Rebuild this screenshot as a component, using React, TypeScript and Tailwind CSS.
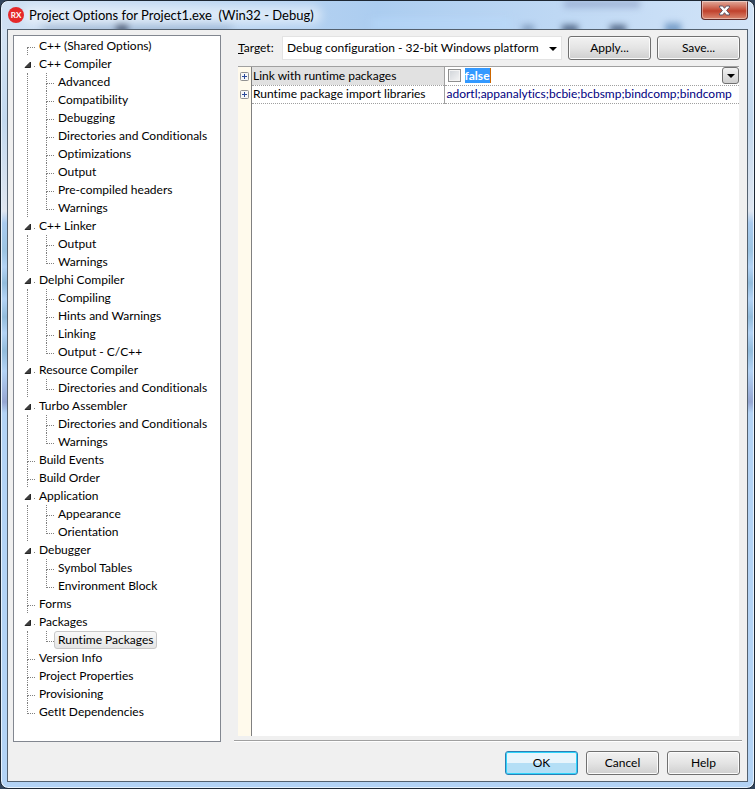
import { useState } from 'react';

interface TreeItem {
  name: string;
  children?: string[];
}

const OPTIONS: TreeItem[] = [
  { name: 'C++ (Shared Options)' },
  {
    name: 'C++ Compiler',
    children: [
      'Advanced', 'Compatibility', 'Debugging', 'Directories and Conditionals',
      'Optimizations', 'Output', 'Pre-compiled headers', 'Warnings',
    ],
  },
  { name: 'C++ Linker', children: ['Output', 'Warnings'] },
  { name: 'Delphi Compiler', children: ['Compiling', 'Hints and Warnings', 'Linking', 'Output - C/C++'] },
  { name: 'Resource Compiler', children: ['Directories and Conditionals'] },
  { name: 'Turbo Assembler', children: ['Directories and Conditionals', 'Warnings'] },
  { name: 'Build Events' },
  { name: 'Build Order' },
  { name: 'Application', children: ['Appearance', 'Orientation'] },
  { name: 'Debugger', children: ['Symbol Tables', 'Environment Block'] },
  { name: 'Forms' },
  { name: 'Packages', children: ['Runtime Packages'] },
  { name: 'Version Info' },
  { name: 'Project Properties' },
  { name: 'Provisioning' },
  { name: 'GetIt Dependencies' },
];

const IMPORT_LIBRARIES = 'adortl;appanalytics;bcbie;bcbsmp;bindcomp;bindcomp';

export default function App() {
  const [selected, setSelected] = useState('Packages/Runtime Packages');
  const [closed, setClosed] = useState<string[]>([]);
  const [linked, setLinked] = useState(false);

  const toggle = (name: string) =>
    setClosed(closed.includes(name) ? closed.filter(n => n !== name) : [...closed, name]);

  return (
    <div className="min-h-screen bg-[#31445c] font-['Lato','Open_Sans',sans-serif] text-[12px] leading-4 text-black [font-variant-ligatures:none]">
      <div className="flex min-h-screen flex-col rounded-lg border border-[#1d2733] bg-[linear-gradient(to_bottom,#d9e6f5_0px,#c3d9ef_120px,#dfe6f0_210px,#a9cbef_222px,#9cc4e2_250px,#b3d3f5_266px,#92bcdc_282px,#b3d3f5_298px,#92bcdc_316px,#b3d3f5_332px,#92bcdc_350px,#b3d3f5_370px,#95a6d2_401px,#b3d3f5_412px,#b3d3f5_100%)] px-[6px] pb-[6px] shadow-[inset_0_0_0_1px_#e6f1fc]">
        <TitleBar />

        <div className="flex flex-1 flex-col border border-[#54616f] bg-[#f0f0f0]">
          <div className="flex flex-1 gap-[13px] pt-[5px] pr-[5px] pl-[5px]">
            {/* Options tree */}
            <nav aria-label="Options" className="w-[208px] shrink-0 border border-[#828790] bg-white pt-px pl-[13px]">
              <ul>
                {OPTIONS.map((item, i) => {
                  const last = i === OPTIONS.length - 1;
                  const open = !closed.includes(item.name);
                  return (
                    <li key={item.name}>
                      <div className="flex h-[18px]">
                        {item.children ? (
                          <Expander name={item.name} open={open} onClick={() => toggle(item.name)} />
                        ) : (
                          <Branch first={i === 0} last={last} />
                        )}
                        <TreeLabel
                          name={item.name}
                          active={selected === item.name}
                          onClick={() => setSelected(item.name)}
                        />
                      </div>
                      {item.children && open && (
                        <ul className={last ? 'pl-[19px]' : 'border-l border-dotted border-[#808080] pl-[18px]'}>
                          {item.children.map((child, j) => (
                            <li key={child} className="flex h-[18px]">
                              <Branch last={j === item.children!.length - 1} />
                              <TreeLabel
                                name={child}
                                active={selected === `${item.name}/${child}`}
                                onClick={() => setSelected(`${item.name}/${child}`)}
                              />
                            </li>
                          ))}
                        </ul>
                      )}
                    </li>
                  );
                })}
              </ul>
            </nav>

            {/* Settings of the selected page */}
            <main className="mb-px flex min-w-0 flex-1 flex-col border-b border-[#a0a0a0] pb-1 pl-1 shadow-[0_1px_0_#ffffff]">
              <div className="mr-[2px] flex items-center gap-[6px] pt-px">
                <label htmlFor="target" className="w-[38px] shrink-0">
                  <span className="underline">T</span>arget:
                </label>
                <div className="relative min-w-0 flex-1">
                  <select
                    id="target"
                    className="block h-6 w-full appearance-none border border-[#e3e3e3] bg-white pr-5 pl-1 outline-none"
                  >
                    <option>Debug configuration - 32-bit Windows platform</option>
                    <option>Release configuration - 32-bit Windows platform</option>
                  </select>
                  <DownArrow className="pointer-events-none absolute top-[11px] right-[5px]" />
                </div>
                <DialogButton label="Apply..." />
                <DialogButton label="Save..." />
              </div>

              <div className="mt-[6px] mr-[3px] flex-1 border-t border-[#a0a0a0] bg-[linear-gradient(to_right,#fffaec_13px,#808080_13px,#808080_14px,#ffffff_14px)]">
                <table className="w-full table-fixed border-collapse">
                  <tbody>
                    <tr className="h-[18px]">
                      <td className="w-[14px] p-0 align-middle"><PlusButton label="Link with runtime packages" /></td>
                      <th className="w-[192px] border-r border-b border-r-[#a0a0a0] border-b-[#a0a0a0] bg-[#e1e1e1] p-0 pl-px text-left font-normal [border-bottom-style:dotted]">
                        <label htmlFor="link">Link with runtime packages</label>
                      </th>
                      <td className="border-b border-dotted border-[#a0a0a0] p-0 pl-[3px]">
                        <div className="flex h-[17px] items-center">
                          <input
                            id="link"
                            type="checkbox"
                            checked={linked}
                            onChange={e => setLinked(e.target.checked)}
                            className="size-[13px] appearance-none border border-[#8e8f8f] bg-linear-to-br from-[#cfd3d8] to-[#f6f6f6] shadow-[inset_0_0_0_1px_#f4f4f4] checked:bg-[#3399ff]"
                          />
                          <span className="ml-1 h-[15px] border-r border-[#cc6600] bg-[#3399ff] leading-[15px] font-bold text-white">
                            {linked ? 'true' : 'false'}
                          </span>
                          <button
                            type="button"
                            aria-label="Choose value"
                            className="ml-auto flex h-[17px] w-[17px] items-center justify-center rounded-[3px] border border-[#707070] bg-linear-to-b from-[#f2f2f2] to-[#cfcfcf]"
                          >
                            <DownArrow />
                          </button>
                        </div>
                      </td>
                    </tr>
                    <tr className="h-[18px]">
                      <td className="p-0 align-middle"><PlusButton label="Runtime package import libraries" /></td>
                      <th className="border-r border-b border-r-[#a0a0a0] border-b-[#a0a0a0] p-0 pl-px text-left font-normal whitespace-nowrap [border-bottom-style:dotted]">
                        Runtime package import libraries
                      </th>
                      <td className="overflow-hidden border-b border-dotted border-[#a0a0a0] p-0 pl-[2px] whitespace-nowrap text-[#000080]">
                        {IMPORT_LIBRARIES}
                      </td>
                    </tr>
                  </tbody>
                </table>
              </div>
            </main>
          </div>

          {/* Dialog buttons */}
          <div className="flex justify-end gap-2 px-[7px] pt-[9px] pb-[6px]">
            <button
              type="button"
              className="h-6 w-[73px] rounded-[3px] border border-[#2c7fb5] bg-linear-to-b from-[#e8f5fc] from-50% to-[#b4dff6] to-50% shadow-[inset_0_0_0_1px_#2fd5fb]"
            >
              OK
            </button>
            <DialogButton label="Cancel" narrow />
            <DialogButton label="Help" narrow />
          </div>
        </div>
      </div>
    </div>
  );
}

function TitleBar() {
  return (
    <header className="relative -mx-[5px] flex h-7 items-start overflow-hidden rounded-t-lg bg-linear-to-r from-[#cfe0f3] via-[#accdf0] via-50% to-[#d2e4f8] pl-[6px]">
      {/* Desktop showing softly through the glass */}
      <div aria-hidden="true" className="absolute inset-0">
        <div className="absolute top-[23px] left-[40px] h-2 w-[190px] bg-[#7390b3]/50 blur-[4px]" />
        <div className="absolute top-[23px] left-[114px] h-2 w-3 bg-[#2a3a55]/80 blur-[3px]" />
        <div className="absolute top-[19px] left-[370px] h-2 w-[140px] bg-[#b9dcfc]/70 blur-[4px]" />
        <div className="absolute -top-px left-[562px] h-2 w-[76px] bg-[#7f92bb]/50 blur-[3px]" />
        <div className="absolute top-[24px] left-[520px] h-2 w-3 bg-[#4b6a92]/50 blur-[3px]" />
        <div className="absolute top-[24px] left-[560px] h-2 w-4 bg-[#22385a]/70 blur-[3px]" />
        <div className="absolute top-[24px] left-[608px] h-2 w-4 bg-[#22385a]/70 blur-[3px]" />
        <div className="absolute top-[22px] left-[663px] h-3 w-4 bg-[#5a86b8]/70 blur-[3px]" />
        <div className="absolute top-[5px] left-[20px] h-[18px] w-[300px] rounded-full bg-white/50 blur-[5px]" />
      </div>
      <svg width="16" height="16" viewBox="0 0 16 16" className="relative mt-[6px] shrink-0">
        <circle cx="8" cy="8" r="8" fill="#e5282a" />
        <text x="8" y="11" textAnchor="middle" fontSize="8" fontWeight="700" fill="#ffffff">RX</text>
      </svg>
      <h1 className="relative ml-[5px] pt-[6px] text-[13px] leading-4 whitespace-pre">
        Project Options for Project1.exe  (Win32 - Debug)
      </h1>
      <button
        type="button"
        aria-label="Close"
        className="relative mr-[5px] ml-auto flex h-[19px] w-[47px] items-center justify-center rounded-b-[4px] border border-t-0 border-[#5b2a2a] bg-linear-to-b from-[#e0aa9c] from-0% via-[#c0402c] via-55% to-[#d98670] shadow-[inset_0_0_0_1px_rgba(255,255,255,0.4)]"
      >
        <svg width="13" height="11" viewBox="0 0 13 11">
          <path
            d="M1.5 1h3.2l1.8 2.3L8.3 1h3.2v1.2L8.6 5.5l2.9 3.3V10H8.3L6.5 7.7 4.7 10H1.5V8.8l2.9-3.3-2.9-3.3z"
            fill="#ffffff"
            stroke="#5d5565"
            strokeWidth="1"
          />
        </svg>
      </button>
    </header>
  );
}

// Dotted line from the parent, turning right towards the label
function Branch({ first, last }: { first?: boolean; last?: boolean }) {
  return (
    <span aria-hidden="true" className="flex w-2 shrink-0 flex-col">
      <span className={`h-[11px] border-b border-dotted border-[#808080] ${first ? '' : 'border-l'}`} />
      {!last && <span className="flex-1 border-l border-dotted border-[#808080]" />}
    </span>
  );
}

function Expander({ name, open, onClick }: { name: string; open: boolean; onClick: () => void }) {
  return (
    <button
      type="button"
      aria-label={`Toggle ${name}`}
      aria-expanded={open}
      onClick={onClick}
      className="-ml-[3px] flex w-[11px] shrink-0 items-center pt-px"
    >
      <svg width="11" height="8" viewBox="0 0 11 8">
        {open ? (
          <path d="M6.5 1v5.5H1z" fill="#404040" stroke="#262626" strokeWidth="1" strokeLinejoin="round" />
        ) : (
          <path d="M1.5 0.5v7l4-3.5z" fill="#ffffff" stroke="#808080" />
        )}
        <path d="M10 5h1v1h-1z" fill="#808080" />
      </svg>
    </button>
  );
}

function TreeLabel({ name, active, onClick }: { name: string; active: boolean; onClick: () => void }) {
  return (
    <button
      type="button"
      onClick={onClick}
      className={`h-[18px] rounded-[3px] border px-[3px] whitespace-nowrap ${
        active ? 'border-[#c8c8c8] bg-linear-to-b from-[#f8f8f8] to-[#e5e5e5]' : 'border-transparent'
      }`}
    >
      {name}
    </button>
  );
}

function DialogButton({ label, narrow }: { label: string; narrow?: boolean }) {
  return (
    <button
      type="button"
      className={`h-6 shrink-0 rounded-[3px] border border-[#707070] bg-linear-to-b from-[#f2f2f2] via-[#e4e4e4] via-50% to-[#cfcfcf] shadow-[inset_0_0_0_1px_#fbfbfb] ${
        narrow ? 'w-[73px]' : 'w-[83px]'
      }`}
    >
      {label}
    </button>
  );
}

function PlusButton({ label }: { label: string }) {
  return (
    <button type="button" aria-label={`Expand ${label}`} className="ml-[2px] block">
      <svg width="9" height="9" viewBox="0 0 9 9">
        <rect x="0.5" y="0.5" width="8" height="8" rx="1" fill="#f6f6f6" stroke="#919191" />
        <path d="M2 4h5v1H2zM4 2h1v5H4z" fill="#2b4a9b" />
      </svg>
    </button>
  );
}

function DownArrow({ className }: { className?: string }) {
  return (
    <svg width="8" height="4" viewBox="0 0 8 4" className={className}>
      <path d="M0 0h8L4 4z" fill="#000000" />
    </svg>
  );
}
